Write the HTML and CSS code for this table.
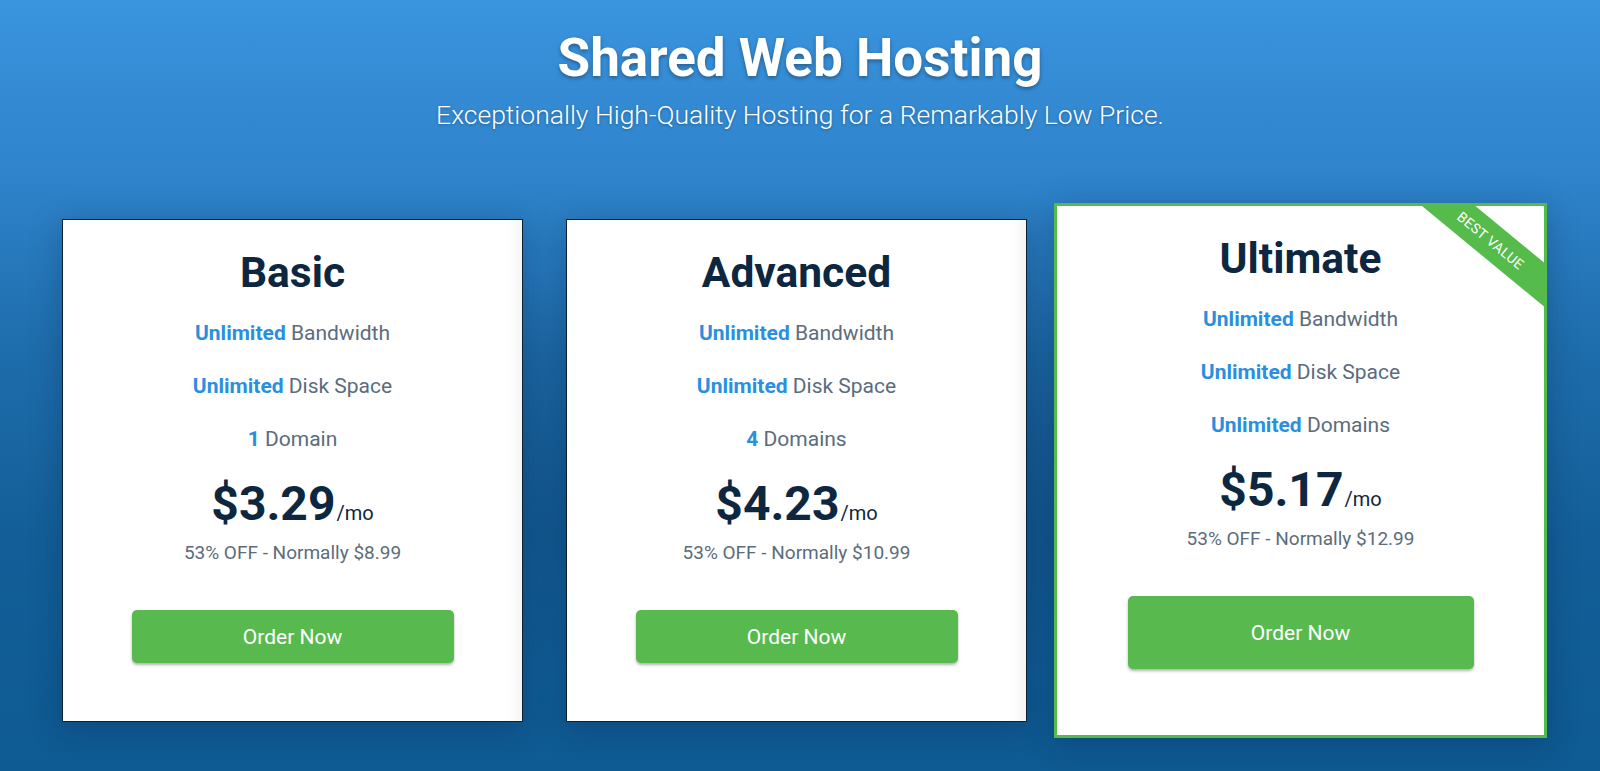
FILE: index.html
```html
<!DOCTYPE html>
<html lang="en">
<head>
<meta charset="utf-8">
<title>Shared Web Hosting</title>
<link rel="stylesheet" href="styles.css">
</head>
<body>
  <header class="hero">
    <h1 class="hero-title">Shared Web Hosting</h1>
    <p class="hero-sub">Exceptionally High-Quality Hosting for a Remarkably Low Price.</p>
  </header>
  <main class="plans">
    <section class="plan">
      <h2 class="plan-name">Basic</h2>
      <ul class="features">
        <li><strong>Unlimited</strong> Bandwidth</li>
        <li><strong>Unlimited</strong> Disk Space</li>
        <li><strong>1</strong> Domain</li>
      </ul>
      <div class="price"><span class="amount">$3.29</span><span class="per">/mo</span></div>
      <p class="discount">53% OFF - Normally $8.99</p>
      <a class="order" href="#">Order Now</a>
    </section>
    <section class="plan">
      <h2 class="plan-name">Advanced</h2>
      <ul class="features">
        <li><strong>Unlimited</strong> Bandwidth</li>
        <li><strong>Unlimited</strong> Disk Space</li>
        <li><strong>4</strong> Domains</li>
      </ul>
      <div class="price"><span class="amount">$4.23</span><span class="per">/mo</span></div>
      <p class="discount">53% OFF - Normally $10.99</p>
      <a class="order" href="#">Order Now</a>
    </section>
    <section class="plan plan-featured">
      <div class="ribbon">Best Value</div>
      <h2 class="plan-name">Ultimate</h2>
      <ul class="features">
        <li><strong>Unlimited</strong> Bandwidth</li>
        <li><strong>Unlimited</strong> Disk Space</li>
        <li><strong>Unlimited</strong> Domains</li>
      </ul>
      <div class="price"><span class="amount">$5.17</span><span class="per">/mo</span></div>
      <p class="discount">53% OFF - Normally $12.99</p>
      <a class="order" href="#">Order Now</a>
    </section>
  </main>
</body>
</html>
```

FILE: styles.css
```css
* { box-sizing: border-box; }

html, body {
  margin: 0;
  height: 100%;
}

body {
  width: 1600px;
  height: 771px;
  overflow: hidden;
  font-family: Roboto, "Noto Sans", Arial, sans-serif;
  background:
    radial-gradient(ellipse 900px 320px at 800px 470px, rgba(0, 20, 50, 0.18), rgba(0, 20, 50, 0) 70%),
    linear-gradient(180deg, #3a94de 0%, #2f84cc 22%, #1e6dac 45%, #135e98 70%, #0e5a92 100%);
  padding-top: 27px;
}

.hero {
  text-align: center;
  color: #fff;
}

.hero-title {
  margin: 0;
  font-size: 53px;
  font-weight: 700;
  line-height: 1.2;
  text-shadow: 0 2px 4px rgba(0, 0, 0, 0.35);
}

.hero-sub {
  margin: 8px 0 0;
  font-size: 26.5px;
  font-weight: 300;
  line-height: 1.2;
  text-shadow: 0 1px 3px rgba(0, 0, 0, 0.3);
}

.plans {
  display: flex;
  align-items: center;
  gap: 43px;
  padding-left: 62px;
  margin-top: 73px;
}

.plan {
  position: relative;
  width: 461px;
  flex: none;
  background: #fff;
  border: 1px solid #0b2236;
  text-align: center;
  padding: 29px 0 58px;
  box-shadow: inset -16px 0 16px -12px rgba(0, 0, 0, 0.06), 0 6px 30px rgba(0, 20, 50, 0.25);
}

.plan-featured {
  width: 493px;
  margin: 0 -16px;
  border: 3px solid #55bb4b;
  padding: 29px 0 66px;
  overflow: hidden;
  box-shadow: 0 6px 30px rgba(0, 20, 50, 0.25);
}

.plan-name {
  margin: 0;
  font-size: 42.5px;
  font-weight: 700;
  line-height: 48px;
  color: #0e2740;
}

.features {
  list-style: none;
  margin: 10px 0 0;
  padding: 0;
}

.features li {
  font-size: 21px;
  line-height: 53px;
  color: #5b6c7c;
}

.features strong {
  color: #2b8fe0;
  font-weight: 700;
}

.price {
  margin-top: 14px;
  line-height: 48px;
  color: #0e2740;
}

.amount {
  font-size: 48px;
  font-weight: 700;
}

.per {
  font-size: 20px;
  margin-left: 1px;
}

.discount {
  margin: 3px 0 0;
  font-size: 19px;
  line-height: 1.2;
  color: #5b6c7c;
}

.order {
  display: flex;
  align-items: center;
  justify-content: center;
  width: 322px;
  height: 53px;
  margin: 45px auto 0;
  background: #58ba4e;
  color: #fff;
  text-decoration: none;
  font-size: 21px;
  border-radius: 5px;
  box-shadow: 0 2px 3px rgba(0, 0, 0, 0.3);
}

.plan-featured .order {
  width: 346px;
  height: 73px;
}

.ribbon {
  position: absolute;
  left: 339px;
  top: 22px;
  width: 200px;
  height: 34px;
  line-height: 34px;
  padding-right: 14px;
  background: #55bb4b;
  color: #fff;
  font-size: 14px;
  text-transform: uppercase;
  letter-spacing: 0.3px;
  text-align: center;
  transform: rotate(39.5deg);
}
```
